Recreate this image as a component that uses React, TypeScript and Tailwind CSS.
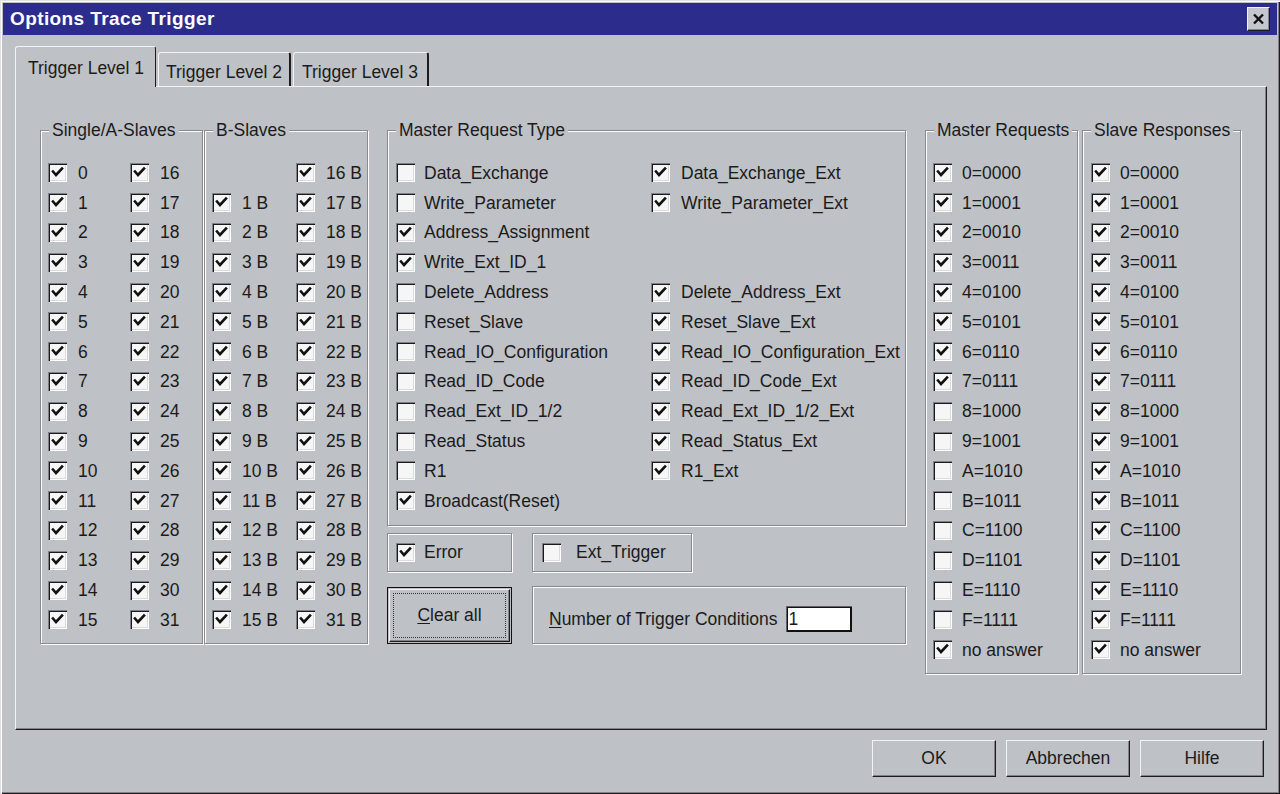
import type { ReactNode } from "react";

const etched =
  "border border-[#868a91] shadow-[1px_1px_0_#ffffff,inset_1px_1px_0_#ffffff]";

function Box({ checked }: { checked: boolean }) {
  return (
    <span className="flex h-[19px] w-[19px] shrink-0 items-center justify-center bg-[#f6f6f6] shadow-[inset_1px_1px_0_#7d8187,inset_2px_2px_0_#1a1a1a,inset_-1px_-1px_0_#ffffff,inset_-2px_-2px_0_#d9dbde]">
      {checked && (
        <svg width="19" height="19" viewBox="0 0 19 19">
          <path
            d="M5 8.5 L8 12 L14 5.5"
            fill="none"
            stroke="#111"
            strokeWidth="2.6"
            strokeLinecap="square"
          />
        </svg>
      )}
    </span>
  );
}

function Check({ label, checked, gap = "gap-[11px]" }: { label?: string; checked?: boolean; gap?: string }) {
  if (label === undefined) return <div className="h-[29.8px]" />;
  return (
    <div className={`flex h-[29.8px] items-center ${gap}`}>
      <Box checked={!!checked} />
      <span className="whitespace-nowrap">{label}</span>
    </div>
  );
}

function Group({ title, className, children }: { title: string; className: string; children: ReactNode }) {
  return (
    <fieldset className={`${etched} ${className}`}>
      <legend className="ml-[8px] bg-[#bec1c6] px-[3px] leading-[20px]">{title}</legend>
      {children}
    </fieldset>
  );
}

const hex = ["0", "1", "2", "3", "4", "5", "6", "7", "8", "9", "A", "B", "C", "D", "E", "F"];
const codes = hex.map((h, i) => `${h}=${i.toString(2).padStart(4, "0")}`);

const requestTypes: [string | undefined, boolean, string | undefined, boolean][] = [
  ["Data_Exchange", false, "Data_Exchange_Ext", true],
  ["Write_Parameter", false, "Write_Parameter_Ext", true],
  ["Address_Assignment", true, undefined, false],
  ["Write_Ext_ID_1", true, undefined, false],
  ["Delete_Address", false, "Delete_Address_Ext", true],
  ["Reset_Slave", false, "Reset_Slave_Ext", true],
  ["Read_IO_Configuration", false, "Read_IO_Configuration_Ext", true],
  ["Read_ID_Code", false, "Read_ID_Code_Ext", true],
  ["Read_Ext_ID_1/2", false, "Read_Ext_ID_1/2_Ext", true],
  ["Read_Status", false, "Read_Status_Ext", true],
  ["R1", false, "R1_Ext", true],
  ["Broadcast(Reset)", true, undefined, false],
];

const raised =
  "border border-t-[#f2f3f5] border-l-[#f2f3f5] border-r-[#1c1c1c] border-b-[#1c1c1c] shadow-[inset_-1px_-1px_0_#80848a]";

export default function App() {
  return (
    <div
      className="flex h-[794px] w-[1280px] flex-col bg-[#bec1c6] p-[3px] text-[17.5px] text-[#1b1b1b] shadow-[inset_1px_1px_0_#dfe1e4,inset_2px_2px_0_#ffffff,inset_-1px_-1px_0_#1c1c1c,inset_-2px_-2px_0_#80848a]"
      style={{ fontFamily: '"Liberation Sans", Arial, sans-serif' }}
    >
      {/* title bar */}
      <div className="flex h-[32px] items-center justify-between bg-[#2b2c8c] pl-[7px] pr-[7px]">
        <span className="text-[19px] font-bold tracking-[0.4px] text-white">Options Trace Trigger</span>
        <span className={`flex h-[24px] w-[23px] items-center justify-center bg-[#c4c7cb] ${raised}`}>
          <svg width="13" height="12" viewBox="0 0 13 12">
            <path d="M2 1.5 L11 10.5 M11 1.5 L2 10.5" stroke="#111" strokeWidth="2.4" />
          </svg>
        </span>
      </div>

      <div className="flex flex-col pl-[12px] pt-[11px]">
        {/* tabs */}
        <div className="flex h-[40px] items-end">
          <div className="relative z-10 -mb-[1px] h-[41px] w-[141px] rounded-t-[3px] border-l border-r border-t border-l-[#f2f3f5] border-r-[#1c1c1c] border-t-[#f2f3f5] bg-[#bec1c6] pl-[12px] pt-[8px]">
            Trigger Level 1
          </div>
          <div className="ml-[2px] h-[34px] w-[133px] rounded-t-[3px] border-l border-r-2 border-t border-l-[#f2f3f5] border-r-[#1c1c1c] border-t-[#f2f3f5] pl-[7px] pt-[6px]">
            Trigger Level 2
          </div>
          <div className="ml-[2px] h-[34px] w-[136px] rounded-t-[3px] border-l border-r-2 border-t border-l-[#f2f3f5] border-r-[#1c1c1c] border-t-[#f2f3f5] pl-[8px] pt-[6px]">
            Trigger Level 3
          </div>
        </div>

        {/* tab panel */}
        <div className={`h-[644px] w-[1252px] ${raised} pl-[24px] pt-[33px]`}>
          <div className="flex items-start">
            <Group title="Single/A-Slaves" className="h-[524px] w-[163px]">
              <div className="grid grid-cols-[82px_1fr] pl-[7px] pt-[18px]">
                {Array.from({ length: 16 }, (_, i) => [
                  <Check key={`a${i}`} label={`${i}`} checked />,
                  <Check key={`b${i}`} label={`${i + 16}`} checked />,
                ])}
              </div>
            </Group>
            <Group title="B-Slaves" className="ml-[1px] h-[524px] w-[164px]">
              <div className="grid grid-cols-[84px_1fr] pl-[7px] pt-[18px]">
                {Array.from({ length: 16 }, (_, i) => [
                  <Check key={`a${i}`} label={i === 0 ? undefined : `${i} B`} checked />,
                  <Check key={`b${i}`} label={`${i + 16} B`} checked />,
                ])}
              </div>
            </Group>

            <div className="ml-[19px] flex w-[519px] flex-col">
              <Group title="Master Request Type" className="h-[406px] w-[519px]">
                <div className="grid grid-cols-[255px_1fr] pl-[8px] pt-[18px]">
                  {requestTypes.map(([l, lc, r, rc], i) => [
                    <Check key={`l${i}`} label={l} checked={lc} gap="gap-[9px]" />,
                    <Check key={`r${i}`} label={r} checked={rc} gap="gap-[11px]" />,
                  ])}
                </div>
              </Group>
              <div className="mt-[7px] flex gap-[20px]">
                <div className={`${etched} flex h-[39px] w-[125px] items-center pl-[8px]`}>
                  <Check label="Error" checked gap="gap-[9px]" />
                </div>
                <div className={`${etched} flex h-[39px] w-[160px] items-center pl-[9px]`}>
                  <Check label="Ext_Trigger" checked={false} gap="gap-[15px]" />
                </div>
              </div>
              <div className="mt-[14px] flex items-start gap-[20px]">
                <button className="mt-[1px] flex h-[57px] w-[125px] items-center justify-center border border-[#111] bg-[#bec1c6] p-[1px]">
                  <span className={`flex h-full w-full items-center justify-center p-[3px] ${raised}`}>
                    <span className="flex h-full w-full items-center justify-center border border-dotted border-[#333]">
                      <span>
                        <span className="underline underline-offset-2">C</span>lear all
                      </span>
                    </span>
                  </span>
                </button>
                <div className={`${etched} flex h-[58px] w-[374px] items-center pl-[16px] pt-[8px]`}>
                  <span className="whitespace-nowrap">
                    <span className="underline underline-offset-2">N</span>umber of Trigger Conditions
                  </span>
                  <span className="ml-[8px] flex h-[26px] w-[66px] items-center bg-white pl-[3px] shadow-[inset_1px_1px_0_#5e6167,inset_2px_2px_0_#111,inset_-1px_-1px_0_#111,inset_-2px_-2px_0_#111]">
                    1
                  </span>
                </div>
              </div>
            </div>

            <Group title="Master Requests" className="ml-[19px] h-[554px] w-[153px]">
              <div className="flex flex-col pl-[7px] pt-[18px]">
                {codes.map((c, i) => (
                  <Check key={c} label={c} checked={i < 8} gap="gap-[10px]" />
                ))}
                <Check label="no answer" checked gap="gap-[10px]" />
              </div>
            </Group>
            <Group title="Slave Responses" className="ml-[4px] h-[554px] w-[159px]">
              <div className="flex flex-col pl-[8px] pt-[18px]">
                {codes.map((c) => (
                  <Check key={c} label={c} checked gap="gap-[10px]" />
                ))}
                <Check label="no answer" checked gap="gap-[10px]" />
              </div>
            </Group>
          </div>
        </div>

        {/* dialog buttons */}
        <div className="mt-[10px] flex justify-end gap-[10px] pr-[13px]">
          {["OK", "Abbrechen", "Hilfe"].map((b) => (
            <button key={b} className={`flex h-[37px] w-[124px] items-center justify-center bg-[#bec1c6] ${raised}`}>
              {b}
            </button>
          ))}
        </div>
      </div>
    </div>
  );
}
